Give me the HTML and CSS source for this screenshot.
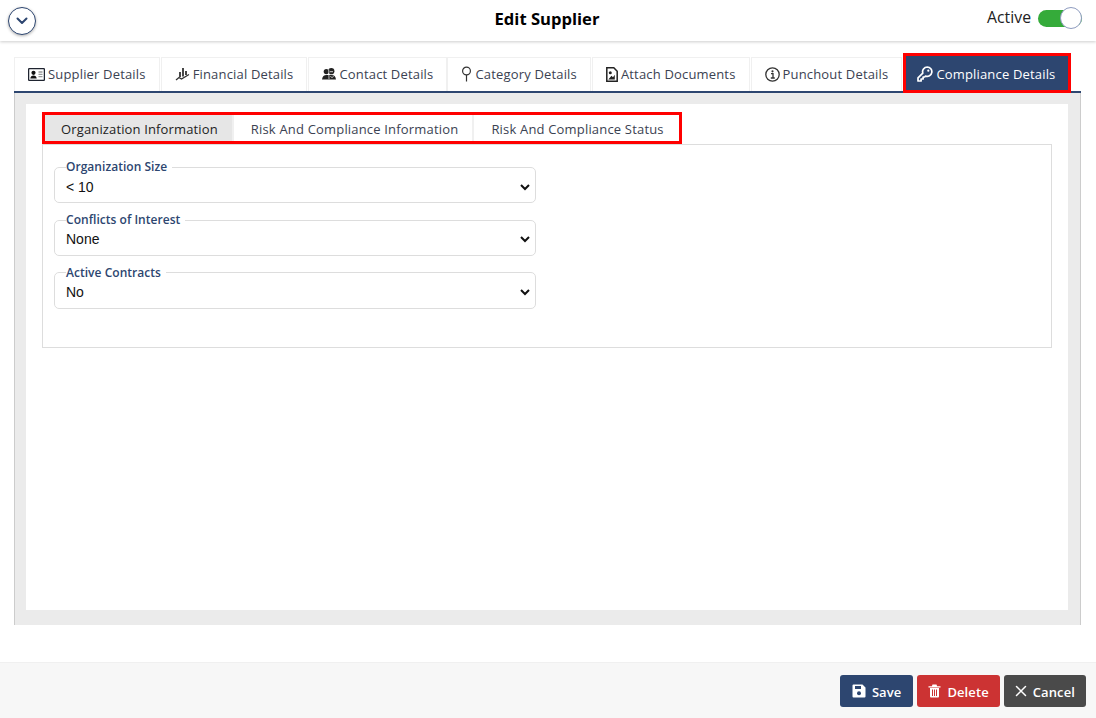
FILE: index.html
```html
<!DOCTYPE html>
<html lang="en">
<head>
<meta charset="utf-8">
<title>Edit Supplier</title>
<link rel="stylesheet" href="styles.css">
</head>
<body>
<header class="topbar">
  <button class="collapse" type="button" aria-label="Collapse">
    <svg width="12" height="8" viewBox="0 0 12 8"><path d="M1.500 1.500 6 6l4.500-4.500" fill="none" stroke="#2d4670" stroke-width="2" stroke-linecap="round" stroke-linejoin="round"/></svg>
  </button>
  <h1 class="title">Edit Supplier</h1>
  <div class="status">
    <span class="status-label">Active</span>
    <span class="switch"><span class="knob"></span></span>
  </div>
</header>

<main class="content">
  <nav class="tabs">
    <a class="tab">
      <svg class="ico" width="17" height="13" viewBox="0 0 17 13"><rect x=".6" y=".6" width="15.800" height="11.800" rx="1" fill="none" stroke="#1f2430" stroke-width="1.300"/><circle cx="5.500" cy="4.800" r="2.100" fill="#111"/><path d="M2.300 10.500c.2-2.200 1.500-3.100 3.200-3.100s3 .9 3.200 3.100z" fill="#111"/><path d="M10.500 4h4M10.500 6.300h4M10.500 8.600h4" stroke="#999" stroke-width="1.300"/></svg>
      Supplier Details</a>
    <a class="tab">
      <svg class="ico" width="15" height="14" viewBox="0 0 15 14"><path d="M1 13 4 10.500l2.500 1.500L14 7.500" fill="none" stroke="#333" stroke-width="1.300"/><path d="M5 5v5M8 1v8.500M11 4v4" stroke="#333" stroke-width="1.800"/></svg>
      Financial Details</a>
    <a class="tab tab-contact">
      <svg class="ico" width="14" height="12" viewBox="0 0 14 12"><circle cx="4.300" cy="3.600" r="2.600" fill="#222"/><circle cx="9.300" cy="3.200" r="3.100" fill="#222"/><path d="M0 11.500c.3-3 2-4.400 4.500-4.400h5c2.500 0 4.200 1.400 4.500 4.400z" fill="#222"/><path d="M6.700 1.500 7 11" stroke="#fff" stroke-width=".7"/><path d="M7.800 3.700h3.200M8.500 8.200l1.500 1.500 1.500-1.500" fill="none" stroke="#fff" stroke-width=".8"/></svg>
      Contact Details</a>
    <a class="tab">
      <svg class="ico" width="11" height="16" viewBox="0 0 11 16"><circle cx="5.500" cy="5" r="3.900" fill="none" stroke="#333" stroke-width="1.200"/><path d="M5.500 9v6.500" stroke="#333" stroke-width="1.200"/></svg>
      Category Details</a>
    <a class="tab">
      <svg class="ico" width="12" height="15" viewBox="0 0 12 15"><path d="M.8.800h7l3.400 3.400v10H.8z" fill="none" stroke="#222" stroke-width="1.500"/><circle cx="4.300" cy="5.800" r="1.500" fill="#222"/><path d="M2.300 12.500 5.500 8.800 7 10.300l1.800-2.500v4.700z" fill="#222"/></svg>
      Attach Documents</a>
    <a class="tab">
      <svg class="ico" width="15" height="15" viewBox="0 0 15 15"><circle cx="7.500" cy="7.500" r="6.700" fill="none" stroke="#333" stroke-width="1.300"/><circle cx="7.500" cy="4.300" r="1.100" fill="#333"/><path d="M6 6.700H8v4M5.800 11h4" fill="none" stroke="#333" stroke-width="1.300"/></svg>
      Punchout Details</a>
    <a class="tab tab-active">
      <svg class="ico" width="16" height="16" viewBox="0 0 16 16"><path d="M10.300 1a4.700 4.700 0 0 0-4.500 6.100L1 11.900V15h3.100v-2h2v-2h1.500l.9-.9A4.700 4.700 0 1 0 10.300 1z" fill="none" stroke="#fff" stroke-width="1.700" stroke-linejoin="round"/><circle cx="11.300" cy="4.700" r="1.100" fill="#fff"/></svg>
      Compliance Details</a>
  </nav>

  <section class="panel">
    <div class="sheet">
      <div class="subtabs">
        <a class="subtab subtab-active">Organization Information</a>
        <a class="subtab">Risk And Compliance Information</a>
        <a class="subtab">Risk And Compliance Status</a>
      </div>
      <div class="form-box">
        <fieldset class="field">
          <legend class="field-label">Organization Size</legend>
          <select class="field-select"><option>&lt; 10</option></select>
        </fieldset>
        <fieldset class="field">
          <legend class="field-label">Conflicts of Interest</legend>
          <select class="field-select"><option>None</option></select>
        </fieldset>
        <fieldset class="field">
          <legend class="field-label">Active Contracts</legend>
          <select class="field-select"><option>No</option></select>
        </fieldset>
      </div>
    </div>
  </section>
</main>

<footer class="actions">
  <button class="btn btn-save" type="button">
    <svg width="14" height="14" viewBox="0 0 14 14"><path d="M1.500.5h9l3 3v9a1 1 0 0 1-1 1h-11a1 1 0 0 1-1-1v-11a1 1 0 0 1 1-1z" fill="#fff"/><path d="M3 2h6v3H3z" fill="#2d4670"/><circle cx="7" cy="9.300" r="2" fill="#2d4670"/></svg>
    <span class="btn-text">Save</span></button>
  <button class="btn btn-delete" type="button">
    <svg width="13" height="14" viewBox="0 0 13 14"><path d="M.5 2.200h12v1.300H.5zM4.500.5h4l.6 1.700H3.900z" fill="#fff"/><path d="M2 4h9v8.500a1 1 0 0 1-1 1H3a1 1 0 0 1-1-1z" fill="#fff"/><path d="M4.500 5.500v6.500M6.500 5.500v6.500M8.500 5.500v6.500" stroke="#cc3333"/></svg>
    <span class="btn-text">Delete</span></button>
  <button class="btn btn-cancel" type="button">
    <svg width="12" height="12" viewBox="0 0 12 12"><path d="M1.500 1.500l9 9M10.500 1.500l-9 9" stroke="#fff" stroke-width="1.500" stroke-linecap="round"/></svg>
    <span class="btn-text">Cancel</span></button>
</footer>
</body>
</html>
```
FILE: styles.css
```css
* { box-sizing: border-box; }
html, body { height: 100%; }
body {
  margin: 0;
  display: flex;
  flex-direction: column;
  height: 718px;
  overflow: hidden;
  background: #fff;
  font-family: "Open Sans", "Liberation Sans", sans-serif;
  color: #333;
}
.topbar {
  height: 41px;
  flex: none;
  display: grid;
  grid-template-columns: 1fr auto 1fr;
  align-items: center;
  padding: 0 14px 0 8px;
  box-shadow: 0 1px 3px rgba(0,0,0,.2);
}
.collapse {
  width: 28px;
  height: 28px;
  padding: 0;
  border: 1.500px solid #2d4670;
  border-radius: 50%;
  background: #fff;
  box-shadow: 0 1px 3px rgba(0,0,0,.3);
  display: flex;
  align-items: center;
  justify-content: center;
}
.title {
  margin: 0 0 4px 4px;
  font-size: 16.600px;
  font-weight: 700;
  color: #000;
}
.status {
  justify-self: end;
  display: flex;
  align-items: center;
  gap: 7px;
  margin-bottom: 4px;
}
.status-label {
  font-size: 15.800px;
  color: #222;
  margin-bottom: 3px;
}
.switch {
  width: 44px;
  height: 17px;
  border-radius: 9px;
  background: #35ab3a;
  display: block;
  position: relative;
}
.knob {
  position: absolute;
  right: 0;
  top: -3px;
  width: 22px;
  height: 22px;
  border-radius: 50%;
  background: #fff;
  border: 1px solid #8f9cc0;
}
.content {
  flex: none;
  height: 584px;
  padding: 16px 15px 0 14px;
  display: flex;
  flex-direction: column;
}
.tabs {
  display: flex;
  align-items: flex-end;
  gap: 1px;
  border-bottom: 2px solid #2d4670;
  height: 36px;
}
.tab {
  height: 34px;
  display: flex;
  align-items: center;
  gap: 3px;
  padding: 0 13px 1px;
  font-size: 13px;
  letter-spacing: .17px;
  color: #3b4252;
  background: #fff;
  border: 1px solid #f0f0f0;
  border-bottom: 0;
  white-space: nowrap;
}
.tab-contact { margin-right: -1px; }
.ico { flex: none; }
.tab-active {
  height: 40px;
  color: #fff;
  background: #2d4670;
  border: 3px solid #f00;
  margin-bottom: -2px;
  padding: 2px 13px 0 11px;
}
.panel {
  height: 532px;
  padding: 11px 12px 15px 11px;
  background: #ebebeb;
  border-left: 1px solid #ccc;
  border-right: 1px solid #ccc;
}
.sheet {
  height: 506px;
  background: #fff;
  padding: 8px 16px 0 16px;
}
.subtabs {
  display: inline-flex;
  height: 32px;
  border: 3px solid #f00;
  vertical-align: top;
}
.subtab {
  display: flex;
  align-items: center;
  padding: 2px 14px 0 17px;
  font-size: 13px;
  letter-spacing: .18px;
  color: #3b4252;
  white-space: nowrap;
  border-right: 2px solid #f0f0f0;
}
.subtab:last-child {
  border-right: 0;
  padding-right: 15px;
}
.subtab-active {
  background: #e6e6e6;
  color: #222;
  padding: 2px 14px 0 16px;
  letter-spacing: .14px;
}
.form-box {
  height: 204px;
  border: 1px solid #ddd;
  padding: 14.200px 11px 0;
  display: flex;
  flex-direction: column;
  gap: 8.650px;
}
.field {
  width: 482px;
  margin: 0;
  padding: 0 2px 0 11px;
  height: 44.200px;
  border: 1px solid #ddd;
  border-radius: 5px;
  min-width: 0;
}
.field-label {
  padding: 0 5px 0 0;
  margin-left: 0;
  font-size: 12px;
  font-weight: 600;
  line-height: 16px;
  letter-spacing: .03px;
  color: #2d4670;
}
.field-select {
  display: block;
  width: calc(100% + 4px);
  height: 22px;
  margin: .4px 0 0 -4px;
  padding: 0;
  border: 0;
  outline: 0;
  background: #fff;
  color: #111;
  font-family: "Liberation Sans", Arial, sans-serif;
  font-size: 14px;
}
.actions {
  flex: 1;
  display: flex;
  justify-content: flex-end;
  gap: 4px;
  margin-top: 37px;
  padding: 12px 10px 0 0;
  background: #f7f7f7;
  border-top: 1px solid #f0f0f0;
}
.btn {
  height: 32px;
  display: flex;
  align-items: center;
  gap: 6px;
  padding: 0 12px;
  border: 0;
  border-radius: 3px;
  color: #fff;
  font-family: inherit;
  font-size: 13px;
  font-weight: 600;
  letter-spacing: .1px;
}
.btn-text { padding-top: 1px; }
.btn-save { background: #2d4670; }
.btn-delete { background: #cc3333; padding: 0 11px; }
.btn-cancel { background: #4a4a4a; padding: 0 11px; }
```
